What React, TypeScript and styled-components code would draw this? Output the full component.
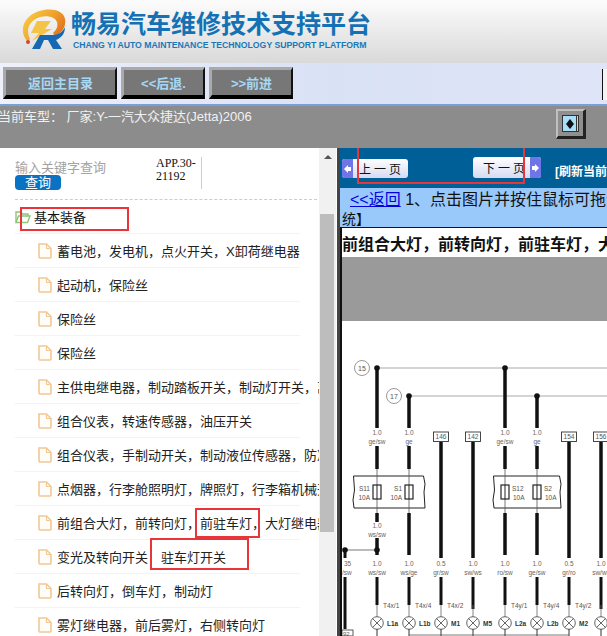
import React from 'react';
import styled, { createGlobalStyle } from 'styled-components';

const cjk = '"Liberation Sans", "Noto Sans CJK SC", sans-serif';
const serif = '"Liberation Serif", "Noto Sans CJK SC", serif';

const GlobalStyle = createGlobalStyle`
  html, body {
    margin: 0;
    padding: 0;
    background: #fff;
    overflow: hidden;
  }
  * {
    box-sizing: border-box;
  }
`;

const treeItems = [
  '蓄电池，发电机，点火开关，X卸荷继电器',
  '起动机，保险丝',
  '保险丝',
  '保险丝',
  '主供电继电器，制动踏板开关，制动灯开关，离合器开关',
  '组合仪表，转速传感器，油压开关',
  '组合仪表，手制动开关，制动液位传感器，防冻液位传感器',
  '点烟器，行李舱照明灯，牌照灯，行李箱机械开关',
  '前组合大灯，前转向灯，前驻车灯，大灯继电器',
  '变光及转向开关　驻车灯开关',
  '后转向灯，倒车灯，制动灯',
  '雾灯继电器，前后雾灯，右侧转向灯',
];

const wires = [
  { x: 37, top: 18, label: ['1.0', 'ge/sw'], low: ['1.0', 'ws/sw'], pin: 'T4x/1', lamp: 'L1a' },
  { x: 69, top: 46, label: ['1.0', 'ge'], low: ['1.0', 'ws/ge'], pin: 'T4x/4', lamp: 'L1b' },
  { x: 101, top: 0, tag: '146', low: ['0.5', 'gr/sw'], pin: 'T4x/2', lamp: 'M1' },
  { x: 133, top: 0, tag: '142', low: ['1.0', 'sw/ws'], pin: '', lamp: 'M5' },
  { x: 165, top: 18, label: ['1.0', 'ge/sw'], low: ['1.0', 'ro/sw'], pin: 'T4y/1', lamp: 'L2a' },
  { x: 197, top: 46, label: ['1.0', 'ge'], low: ['1.0', 'ge/sw'], pin: 'T4y/4', lamp: 'L2b' },
  { x: 229, top: 0, tag: '154', low: ['0.5', 'gr/ro'], pin: 'T4y/2', lamp: 'M2' },
  { x: 261, top: 0, tag: '156', low: ['1.0', 'sw/ws'], pin: '', lamp: '' },
];

const LogoIcon = () => (
  <svg width="46" height="42" viewBox="0 0 46 42">
    <defs>
      <linearGradient id="ring" x1="0" y1="0" x2="1" y2="0.6">
        <stop offset="0" stopColor="#f8d545" />
        <stop offset="0.6" stopColor="#f0a12c" />
        <stop offset="1" stopColor="#e2701c" />
      </linearGradient>
    </defs>
    <path d="M8 33C-3 22 4 4 24 1c14-2 23 4 21 14-1 6-5 10-10 12l-2-3c4-3 5-7 4-11-2-5-9-7-17-5C10 11 5 20 10 30z" fill="url(#ring)" />
    <path d="M17 12h14l-6 8h7L12 32l7-8h-8z" fill="#f5c348" />
    <path d="M12 40l8-14h13c5 0 10-3 12-8 0 7-4 11-9 13l6 9h-9l-5-9h-4l-4 9z" fill="#1668b2" />
    <circle cx="8" cy="33" r="2" fill="#d8452a" />
  </svg>
);

const FileIcon = () => (
  <svg width="14" height="16" viewBox="0 0 14 16" style={{ flex: 'none' }}>
    <path d="M1 1h7.5L13 5.5v8.3a1.2 1.2 0 0 1-1.2 1.2H2.2A1.2 1.2 0 0 1 1 13.8z" fill="#fffdf9" stroke="#f2c894" strokeWidth="1.6" />
    <path d="M8.5 1v4.5H13" fill="none" stroke="#f2c894" strokeWidth="1.2" />
  </svg>
);

const FolderIcon = () => (
  <svg width="16" height="14" viewBox="0 0 16 14" style={{ flex: 'none' }}>
    <path d="M1 12V2h5l1.5 2H13v2" fill="none" stroke="#8cc47a" strokeWidth="1.4" />
    <path d="M1 12.5l2.5-6.5H15l-2.5 6.5z" fill="#fff" stroke="#8cc47a" strokeWidth="1.4" />
  </svg>
);

const Lamp = ({ x, y }: { x: number; y: number }) => (
  <g stroke="#555" strokeWidth="0.9" fill="#fff">
    <circle cx={x} cy={y} r="6.3" />
    <path d={`M${x - 4.4} ${y - 4.4}L${x + 4.4} ${y + 4.4}M${x + 4.4} ${y - 4.4}L${x - 4.4} ${y + 4.4}`} />
  </g>
);

const Fuse = ({ x, y, name, left }: { x: number; y: number; name: string; left: boolean }) => (
  <g>
    <rect x={x - 4} y={y - 7} width="8" height="14" fill="#fff" stroke="#111" strokeWidth="1.1" />
    <line x1={x} y1={y - 7} x2={x} y2={y + 7} stroke="#222" strokeWidth="1" />
    <text x={left ? x - 7 : x + 7} y={y - 1} textAnchor={left ? 'end' : 'start'} fontSize="6.5" fill="#555">{name}</text>
    <text x={left ? x - 7 : x + 8} y={y + 8} textAnchor={left ? 'end' : 'start'} fontSize="6.5" fill="#555">10A</text>
  </g>
);

const WiringDiagram = () => (
  <svg width="265" height="286" viewBox="2 0 265 286" fontFamily="Liberation Sans, sans-serif" style={{ display: 'block' }}>
    <line x1="37" y1="18" x2="267" y2="18" stroke="#c6c6c6" strokeWidth="1.6" />
    <line x1="69" y1="46" x2="267" y2="46" stroke="#c6c6c6" strokeWidth="1.6" />
    <circle cx="22" cy="18" r="7.5" fill="#fff" stroke="#999" />
    <text x="22" y="21" textAnchor="middle" fontSize="7" fill="#555">15</text>
    <circle cx="54" cy="46" r="7.5" fill="#fff" stroke="#999" />
    <text x="54" y="49" textAnchor="middle" fontSize="7" fill="#555">17</text>
    <path d="M13.5 126h70l1.5 8-1 8 1 16h-71l-1-8 1.5-10z" fill="#fff" stroke="#222" strokeWidth="1" />
    <path d="M153.5 126h66l1.5 8-1 8 1 16h-67l-1-8 1.5-10z" fill="#fff" stroke="#222" strokeWidth="1" />
    {wires.map((w) => (
      <g key={w.x}>
        {w.top > 0 ? (
          <>
            <line x1={w.x} y1={w.top} x2={w.x} y2="78" stroke="#111" strokeWidth="3.5" />
            <circle cx={w.x} cy={w.top} r="2.8" fill="#111" />
            <text x={w.x} y="85" textAnchor="middle" fontSize="6.5" fill="#666">{w.label?.[0]}</text>
            <text x={w.x} y="94" textAnchor="middle" fontSize="6.5" fill="#666">{w.label?.[1]}</text>
            <line x1={w.x} y1="96" x2={w.x} y2="119" stroke="#111" strokeWidth="3.5" />
            <line x1={w.x} y1="119" x2={w.x} y2="163" stroke="#555" strokeWidth="0.8" />
            <line x1={w.x} y1="163" x2={w.x} y2="205" stroke="#111" strokeWidth="3.5" />
          </>
        ) : (
          <>
            <rect x={w.x - 7.5} y="82" width="15" height="9.5" fill="#fff" stroke="#333" strokeWidth="0.9" />
            <text x={w.x} y="89" textAnchor="middle" fontSize="6.5" fill="#555">{w.tag}</text>
            <line x1={w.x} y1="92" x2={w.x} y2="208" stroke="#111" strokeWidth="3.5" />
          </>
        )}
        <text x={w.x} y="216" textAnchor="middle" fontSize="6.5" fill="#666">{w.low[0]}</text>
        <text x={w.x} y="225" textAnchor="middle" fontSize="6.5" fill="#666">{w.low[1]}</text>
        <line x1={w.x} y1="227" x2={w.x} y2={w.pin ? 255 : 259} stroke="#111" strokeWidth="3" />
        <line x1={w.x} y1="255" x2={w.x} y2="267" stroke="#666" strokeWidth="0.8" />
        <text x={w.x + 6} y="258" fontSize="6.5" fill="#555">{w.pin}</text>
        <Lamp x={w.x} y={273} />
        <text x={w.x + 10} y="276" fontSize="6.5" fontWeight="700" fill="#333">{w.lamp}</text>
        <line x1={w.x} y1="279" x2={w.x} y2="286" stroke="#333" strokeWidth="1" />
      </g>
    ))}
    <Fuse x={37} y={142} name="S11" left />
    <Fuse x={69} y={142} name="S1" left />
    <Fuse x={165} y={142} name="S12" left={false} />
    <Fuse x={197} y={142} name="S2" left={false} />
    <rect x="25" y="172" width="24" height="16" fill="#fff" />
    <text x="37" y="178" textAnchor="middle" fontSize="6.5" fill="#666">1.0</text>
    <text x="37" y="187" textAnchor="middle" fontSize="6.5" fill="#666">ws/sw</text>
    <line x1="5" y1="200" x2="37" y2="200" stroke="#555" strokeWidth="0.8" />
    <circle cx="5" cy="200" r="2.8" fill="#111" />
    <circle cx="37" cy="200" r="2.8" fill="#111" />
    <line x1="5" y1="200" x2="5" y2="208" stroke="#111" strokeWidth="3" />
    <text x="4" y="216" fontSize="6.5" fill="#666">35</text>
    <text x="2" y="225" fontSize="6.5" fill="#666">/sw</text>
    <line x1="5" y1="227" x2="5" y2="279" stroke="#111" strokeWidth="3" />
    <rect x="2" y="280" width="11" height="6" fill="#fff" stroke="#333" strokeWidth="0.8" />
    <text x="3" y="286" fontSize="6" fill="#555">92</text>
    <line x1="69" y1="285" x2="229" y2="285" stroke="#555" strokeWidth="0.8" />
  </svg>
);

const App: React.FC = () => (
  <>
    <GlobalStyle />
    <Page>
      <Header>
        <LogoIcon />
        <Brand>
          <BrandTitle>畅易汽车维修技术支持平台</BrandTitle>
          <BrandSub>CHANG YI AUTO MAINTENANCE TECHNOLOGY SUPPORT PLATFORM</BrandSub>
        </Brand>
      </Header>
      <Toolbar>
        <NavButton width={114}>返回主目录</NavButton>
        <NavButton width={84}>&lt;&lt;后退.</NavButton>
        <NavButton width={84}>&gt;&gt;前进</NavButton>
        <ToolbarEdge />
      </Toolbar>
      <InfoBar>
        <InfoText>当前车型： 厂家:Y-一汽大众捷达(Jetta)2006</InfoText>
        <ToggleButton>
          <ToggleFace>
            <svg width="8" height="10" viewBox="0 0 8 10">
              <path d="M4 0L8 5 4 10 0 5z" fill="#111" />
            </svg>
          </ToggleFace>
        </ToggleButton>
      </InfoBar>
      <Main>
        <LeftPanel>
          <SearchRow>
            <SearchForm>
              <SearchHint>输入关键字查询</SearchHint>
              <SearchButton>查询</SearchButton>
            </SearchForm>
            <AppCode>APP.30-21192</AppCode>
          </SearchRow>
          <TreeList>
            <FolderRow>
              <FolderIcon />
              <span>基本装备</span>
              <Mark left={5} top={-1} width={109} height={24} />
            </FolderRow>
            {treeItems.map((item, i) => (
              <TreeRow key={i}>
                <FileIcon />
                <TreeLabel>{item}</TreeLabel>
                {i === 8 && <Mark left={180} top={-6} width={65} height={30} />}
                {i === 9 && <Mark left={135} top={-10} width={99} height={32} />}
              </TreeRow>
            ))}
          </TreeList>
          <ScrollTrack>
            <ScrollArrow />
            <ScrollThumb />
          </ScrollTrack>
        </LeftPanel>
        <RightPanel>
          <PagerBar>
            <PagerButton>
              <PagerArrow side="left">
                <svg width="7" height="8" viewBox="0 0 7 8"><path d="M0 4l4-4v2h3v4H4v2z" fill="#fff" /></svg>
              </PagerArrow>
              <PagerLabel indent={6}>上一页</PagerLabel>
            </PagerButton>
            <PagerButtonNext>
              <PagerLabel indent={10}>下一页</PagerLabel>
              <PagerArrow side="right">
                <svg width="7" height="8" viewBox="0 0 7 8"><path d="M7 4L3 0v2H0v4h3v2z" fill="#fff" /></svg>
              </PagerArrow>
            </PagerButtonNext>
            <RefreshText>[刷新当前</RefreshText>
            <PagerMark />
          </PagerBar>
          <NoticeBar>
            <NoticeLine>
              <BackLink>&lt;&lt;返回</BackLink> 1、点击图片并按住鼠标可拖动图片
            </NoticeLine>
            <NoticeTail>统】</NoticeTail>
          </NoticeBar>
          <DiagramFrame>
            <DiagramTitle>前组合大灯，前转向灯，前驻车灯，大灯继电器</DiagramTitle>
            <GreyBand />
            <DiagramSheet>
              <WiringDiagram />
            </DiagramSheet>
          </DiagramFrame>
        </RightPanel>
      </Main>
    </Page>
  </>
);

const Page = styled.div`
  width: 607px;
  height: 636px;
  overflow: hidden;
  display: flex;
  flex-direction: column;
  font-family: ${cjk};
`;

const Header = styled.header`
  height: 63px;
  flex: none;
  display: flex;
  align-items: center;
  gap: 5px;
  padding: 0 0 4px 20px;
  background: linear-gradient(#fcfcfc, #d9d9d9);
`;

const Brand = styled.div`
  display: flex;
  flex-direction: column;
`;

const BrandTitle = styled.div`
  font-size: 25px;
  line-height: 30px;
  font-weight: 700;
  color: #1472b4;
  white-space: nowrap;
`;

const BrandSub = styled.div`
  font-size: 8.7px;
  line-height: 10px;
  font-weight: 700;
  color: #1a78b8;
  white-space: nowrap;
  margin-top: 1px;
  padding-left: 2px;
`;

const Toolbar = styled.nav`
  height: 43px;
  flex: none;
  display: flex;
  gap: 4px;
  padding: 4px 0 0 3px;
  background: linear-gradient(90deg, #eef0fa 0%, #d9e1f5 55%, #dfe5f7 100%);
  border-bottom: 2px solid #7b9ed8;
`;

const NavButton = styled.div<{ width: number }>`
  width: ${(p) => p.width}px;
  height: 32px;
  display: flex;
  align-items: center;
  justify-content: center;
  font-size: 13px;
  font-weight: 700;
  color: #a6d8f4;
  background: #777;
  border-top: 3px solid #aaa;
  border-left: 3px solid #aaa;
  border-right: 2px solid #111;
  border-bottom: 4px solid #000;
`;

const ToolbarEdge = styled.div`
  width: 5px;
  height: 31px;
  margin: 2px 0 0 auto;
  background: #f4f4f4;
  border-left: 1px solid #111;
`;

const InfoBar = styled.div`
  height: 42px;
  flex: none;
  background: #8c8c8c;
  display: flex;
  justify-content: space-between;
  align-items: flex-start;
  padding-right: 21px;
`;

const InfoText = styled.div`
  font-size: 13px;
  line-height: 18px;
  padding-top: 2px;
  color: #f1f1f1;
  margin-left: -2px;
  white-space: nowrap;
`;

const ToggleButton = styled.div`
  width: 30px;
  height: 30px;
  margin-top: 3px;
  padding: 4px;
  background: #8f8f8f;
  border-top: 2px solid #c0c0c0;
  border-left: 2px solid #c0c0c0;
  border-right: 3px solid #222;
  border-bottom: 3px solid #222;
`;

const ToggleFace = styled.div`
  width: 100%;
  height: 100%;
  display: flex;
  align-items: center;
  justify-content: center;
  background: #a9def8;
  border: 1px solid #333;
  border-right: 3px double #333;
`;

const Main = styled.main`
  flex: 1;
  min-height: 0;
  display: flex;
`;

const LeftPanel = styled.aside`
  position: relative;
  width: 337px;
  flex: none;
  background: #fff;
  overflow: hidden;
`;

const SearchRow = styled.div`
  width: 307px;
  height: 52px;
  margin-left: 15px;
  display: flex;
  border-bottom: 1px dashed #ccc;
  padding-top: 9px;
`;

const SearchForm = styled.div`
  width: 141px;
  flex: none;
`;

const SearchHint = styled.div`
  font-size: 13px;
  line-height: 15px;
  margin-top: 3px;
  color: #a3a3a3;
`;

const SearchButton = styled.div`
  width: 46px;
  height: 15px;
  border-radius: 4px;
  background: #0a72c4;
  color: #fff;
  font-size: 13px;
  line-height: 15px;
  text-align: center;
`;

const AppCode = styled.div`
  width: 46px;
  height: 32px;
  font-family: ${serif};
  font-size: 12px;
  line-height: 12.5px;
  color: #111;
  border-right: 1px solid #ccc;
`;

const TreeList = styled.div`
  width: 285px;
  margin-left: 15px;
  display: flex;
  flex-direction: column;
`;

const FolderRow = styled.div`
  position: relative;
  height: 34px;
  display: flex;
  align-items: center;
  gap: 3px;
  font-size: 13px;
  color: #111;
  white-space: nowrap;
  border-bottom: 1px solid #f3f3f3;
`;

const TreeRow = styled.div`
  position: relative;
  height: 34px;
  display: flex;
  align-items: center;
  gap: 5px;
  padding-left: 23px;
  color: #222;
  font-size: 13px;
  white-space: nowrap;
  border-bottom: 1px solid #f3f3f3;
`;

const TreeLabel = styled.span`
  width: 262px;
  flex: none;
  overflow: hidden;
`;

const Mark = styled.div<{ left: number; top: number; width: number; height: number }>`
  position: absolute;
  left: ${(p) => p.left}px;
  top: ${(p) => p.top + 8}px;
  width: ${(p) => p.width}px;
  height: ${(p) => p.height}px;
  border: 2px solid #e8353a;
  pointer-events: none;
`;

const ScrollTrack = styled.div`
  position: absolute;
  left: 319px;
  top: 0;
  bottom: 0;
  width: 17px;
  background: #f1f1f1;
`;

const ScrollArrow = styled.div`
  width: 0;
  height: 0;
  margin: 7px auto 0;
  border-left: 4px solid transparent;
  border-right: 4px solid transparent;
  border-bottom: 4px solid #555;
`;

const ScrollThumb = styled.div`
  width: 14px;
  height: 318px;
  margin: 55px 0 0 1px;
  background: #bdbdbd;
`;

const RightPanel = styled.section`
  flex: 1;
  min-width: 0;
  overflow: hidden;
  border-left: 3px solid #444;
  background: #fff;
  display: flex;
  flex-direction: column;
`;

const PagerBar = styled.div`
  position: relative;
  height: 40px;
  flex: none;
  background: #005f96;
  display: flex;
  align-items: flex-start;
  padding: 11px 0 0 2px;
`;

const PagerButton = styled.div`
  width: 66px;
  height: 19px;
  display: flex;
  align-items: center;
  background: linear-gradient(#fff, #d5daf2);
  border-radius: 3px;
`;

const PagerButtonNext = styled(PagerButton)`
  width: 68px;
  height: 21px;
  margin: -2px 0 0 65px;
  justify-content: flex-end;
`;

const PagerArrow = styled.div<{ side: 'left' | 'right' }>`
  width: 11px;
  height: 100%;
  flex: none;
  display: flex;
  align-items: center;
  justify-content: center;
  background: #6f74e6;
  border-radius: ${(p) => (p.side === 'left' ? '3px 0 0 3px' : '0 3px 3px 0')};
`;

const PagerLabel = styled.span<{ indent: number }>`
  flex: 1;
  padding-left: ${(p) => p.indent}px;
  font-size: 12px;
  letter-spacing: 3px;
  color: #111;
  white-space: nowrap;
`;

const RefreshText = styled.span`
  margin: 3px 0 0 14px;
  font-size: 12px;
  font-weight: 700;
  color: #fff;
  white-space: nowrap;
`;

const PagerMark = styled.div`
  position: absolute;
  left: 17px;
  top: -5px;
  width: 168px;
  height: 41px;
  border: 2px solid #e8353a;
  pointer-events: none;
`;

const NoticeBar = styled.div`
  height: 39px;
  flex: none;
  background: #99c8fb;
  white-space: nowrap;
  overflow: hidden;
  color: #111;
`;

const NoticeLine = styled.div`
  font-size: 16px;
  line-height: 22px;
  padding: 1px 0 0 10px;
`;

const BackLink = styled.a`
  color: #0000e0;
  text-decoration: underline;
`;

const NoticeTail = styled.div`
  font-size: 14px;
  line-height: 16px;
  padding-left: 2px;
`;

const DiagramFrame = styled.div`
  flex: 1;
  min-height: 0;
  border-top: 1px solid #111;
  border-left: 2px solid #111;
  background: #fff;
`;

const DiagramTitle = styled.div`
  height: 29px;
  overflow: hidden;
  font-size: 16px;
  line-height: 33px;
  font-weight: 700;
  color: #111;
  white-space: nowrap;
`;

const GreyBand = styled.div`
  height: 64px;
  background: #9a9a9a;
`;

const DiagramSheet = styled.div`
  padding-top: 29px;
`;

export default App;
